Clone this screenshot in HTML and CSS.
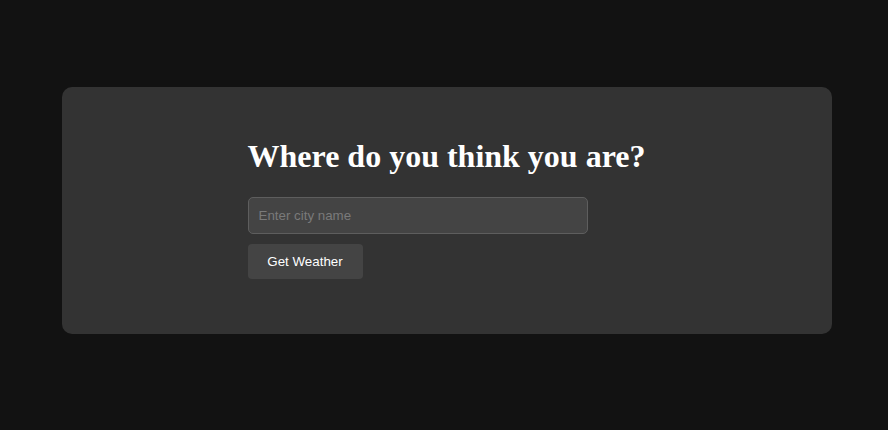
FILE: index.html
```html
<!DOCTYPE html>
<html>
<head>
<meta charset="utf-8">
<link rel="stylesheet" href="styles.css">
</head>
<body>
  <div class="card">
    <div class="inner">
      <h1 class="title">Where do you think you are?</h1>
      <form class="form">
        <input class="city" type="text" placeholder="Enter city name">
        <button class="btn" type="button">Get Weather</button>
      </form>
    </div>
  </div>
</body>
</html>
```

FILE: styles.css
```css
html, body {
  margin: 0;
  padding: 0;
  background: #121212;
}
body {
  padding-top: 87px;
  padding-left: 62px;
}
.card {
  width: 770px;
  box-sizing: border-box;
  background: #333333;
  border-radius: 10px;
  padding: 30px 0 55px;
}
.inner {
  width: 400px;
  margin: 0 auto;
  padding-left: 1px;
}
.title {
  font-family: "Liberation Serif", "Times New Roman", serif;
  font-weight: bold;
  font-size: 32px;
  color: #ffffff;
  margin: 21.44px 0;
  line-height: 37px;
}
.form {
  display: flex;
  flex-direction: column;
  align-items: flex-start;
  gap: 10px;
  margin: 0;
}
.city {
  width: 340px;
  height: 37px;
  box-sizing: border-box;
  padding: 0 10px;
  background: #444444;
  border: 1px solid #5e5e5e;
  border-radius: 5px;
  color: #ffffff;
  font-family: "Liberation Sans", Arial, sans-serif;
  font-size: 13.33px;
  outline: none;
}
.city::placeholder {
  color: #7a7a7a;
}
.btn {
  height: 35px;
  width: 115px;
  padding: 0;
  background: #444444;
  border: none;
  border-radius: 4px;
  color: #ffffff;
  font-family: "Liberation Sans", Arial, sans-serif;
  font-size: 13.33px;
}
```
